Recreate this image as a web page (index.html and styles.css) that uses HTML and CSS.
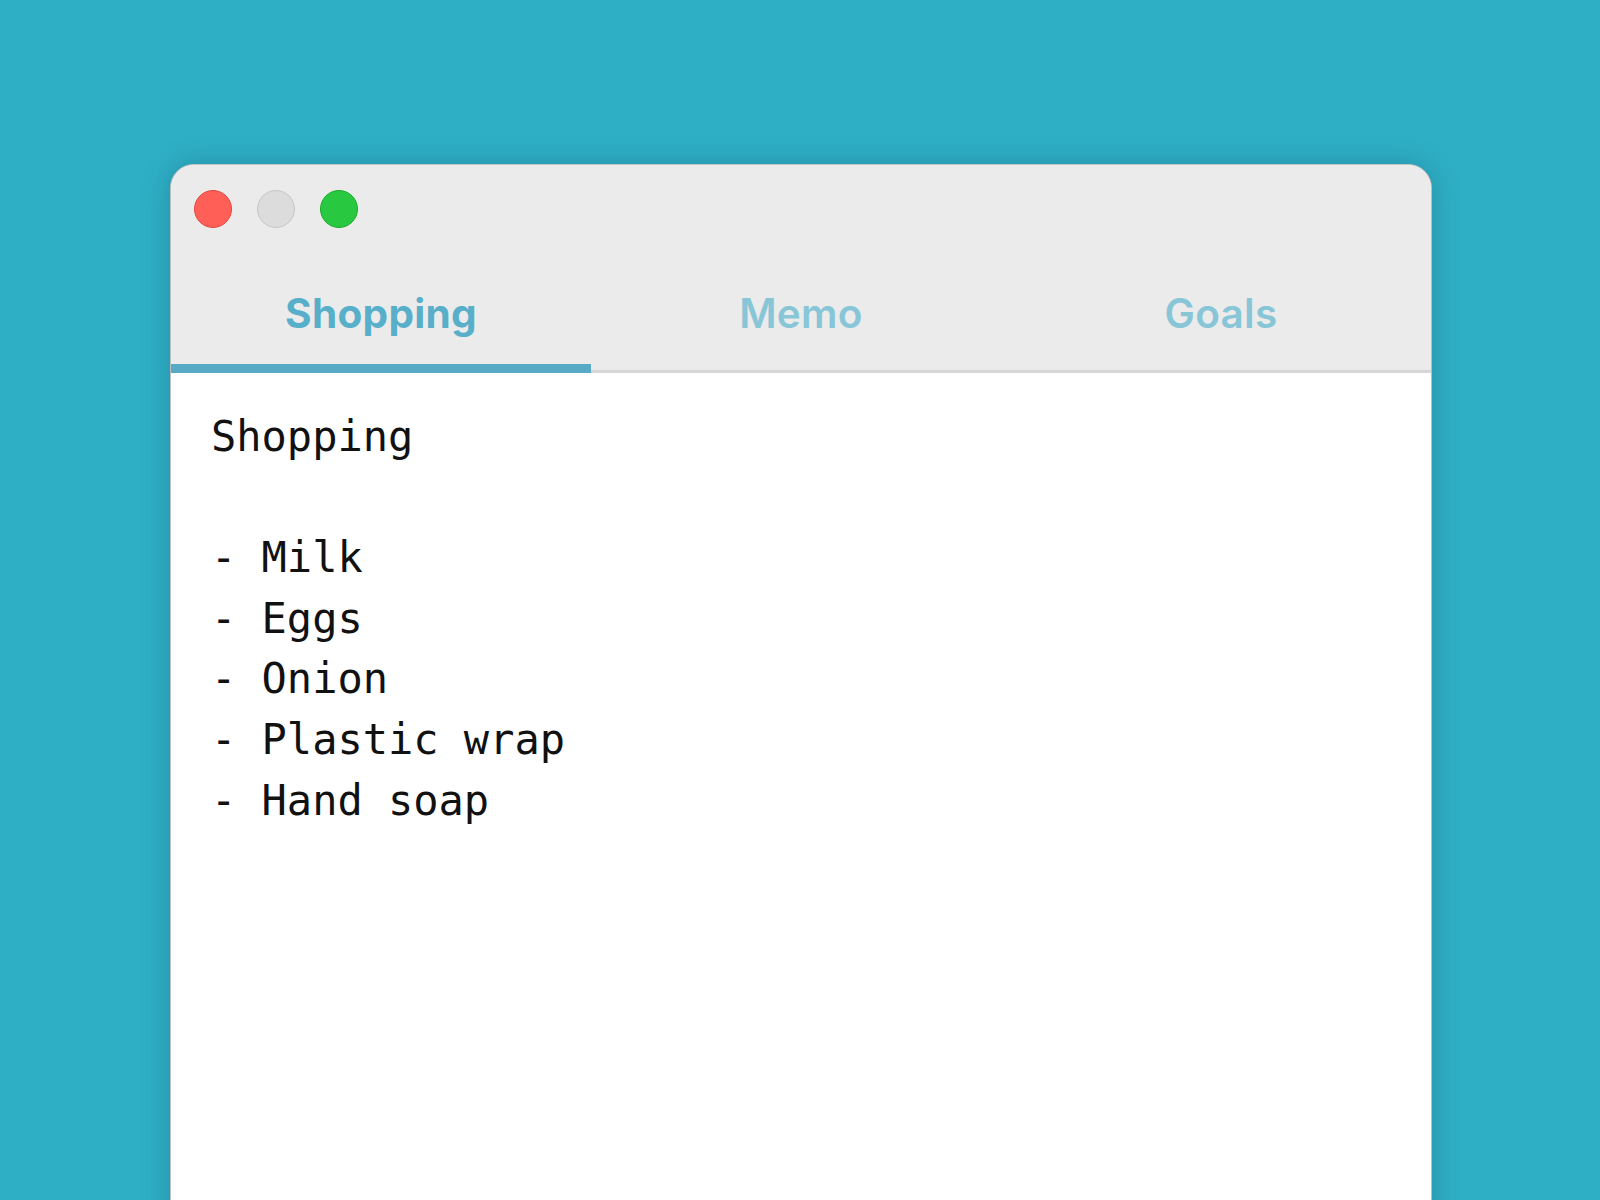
FILE: index.html
```html
<!DOCTYPE html>
<html lang="en">
<head>
<meta charset="utf-8">
<title>Notes</title>
<link rel="stylesheet" href="styles.css">
</head>
<body>
<div class="stage">
  <div class="window">
    <div class="titlebar">
      <span class="light red"></span>
      <span class="light gray"></span>
      <span class="light green"></span>
    </div>
    <div class="tabs">
      <div class="tab active">Shopping</div>
      <div class="tab">Memo</div>
      <div class="tab">Goals</div>
    </div>
    <div class="content"><pre class="note">Shopping

- Milk
- Eggs
- Onion
- Plastic wrap
- Hand soap</pre></div>
  </div>
</div>
</body>
</html>
```

FILE: styles.css
```css
html, body {
  margin: 0;
  padding: 0;
  height: 100%;
  overflow: hidden;
}
body {
  background: #2fafc6;
  font-family: Inter, "Noto Sans", sans-serif;
}
.stage {
  padding: 164px 0 0 170px;
}
.window {
  width: 1262px;
  height: 1100px;
  background: #ffffff;
  border: 1px solid #bdbdbd;
  border-top-color: #c4c4c4;
  border-radius: 24px 24px 0 0;
  overflow: hidden;
  box-shadow: 0 0 28px rgba(0, 60, 80, 0.28);
  box-sizing: border-box;
}
.titlebar {
  height: 87px;
  background: #ebebeb;
  display: flex;
  align-items: center;
  gap: 25px;
  padding-left: 23px;
}
.light {
  width: 38px;
  height: 38px;
  border-radius: 50%;
  box-sizing: border-box;
}
.red { background: #ff5f57; border: 1px solid #e2463f; }
.gray { background: #dcdcdc; border: 1px solid #c6c6c6; }
.green { background: #28c840; border: 1px solid #1aab29; }
.tabs {
  display: flex;
  background: #ebebeb;
  border-bottom: 3px solid #d6d6d6;
}
.tab {
  flex: 1;
  text-align: center;
  font-size: 40.5px;
  line-height: 48px;
  font-weight: 600;
  color: #88c6d7;
  padding: 38px 0 26px;
  border-bottom: 9px solid transparent;
  margin-bottom: -3px;
  letter-spacing: 0.3px;
}
.tab.active {
  color: #58afc9;
  font-weight: 700;
  border-bottom-color: #56aac5;
}
.content {
  padding: 34px 40px;
}
.note {
  margin: 0;
  font-family: "DejaVu Sans Mono", "Liberation Mono", monospace;
  font-size: 42px;
  line-height: 60.6px;
  color: #111111;
}
```
